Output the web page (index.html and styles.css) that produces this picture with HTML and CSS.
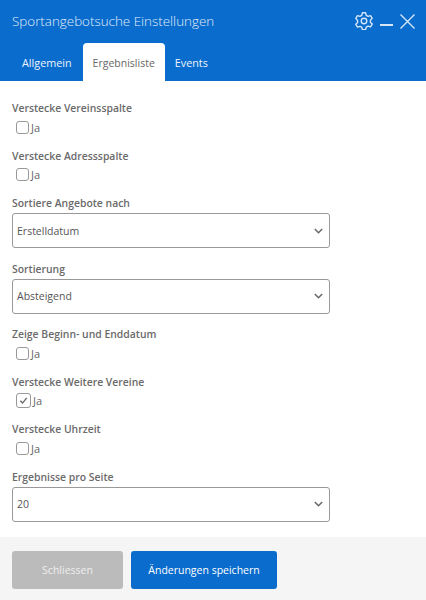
FILE: index.html
```html
<!DOCTYPE html>
<html lang="de">
<head>
    <meta charset="UTF-8">
    <meta name="viewport" content="width=device-width, initial-scale=1.0">
    <title>Sportangebotsuche Einstellungen</title>
    <link rel="stylesheet" href="styles.css">
</head>
<body>
    <header class="header">
        <div class="title-row">
            <h1 class="title">Sportangebotsuche Einstellungen</h1>
            <div class="window-icons">
                <svg width="18" height="18" viewBox="1 1 22 22" fill="none" stroke="#d5e6f7" stroke-width="1.700" stroke-linejoin="round">
                    <path d="M10 2h4l.7 3 2.300 1.300 3-.9 2 3.400-2.200 2.200v2.600l2.200 2.200-2 3.400-3-.9-2.300 1.300-.7 3h-4l-.7-3L7 18.600l-3 .9-2-3.400 2.200-2.200v-2.600L2 8.800l2-3.400 3 .9 2.300-1.300z"/>
                    <circle cx="12" cy="12" r="3.400"/>
                </svg>
                <span class="icon-minimize"></span>
                <svg width="15" height="15" viewBox="0 0 15 15" fill="none" stroke="#d5e6f7" stroke-width="1.400">
                    <path d="M.5.5l14 14M14.500.5l-14 14"/>
                </svg>
            </div>
        </div>
        <nav class="tabs">
            <a class="tab">Allgemein</a>
            <a class="tab active">Ergebnisliste</a>
            <a class="tab">Events</a>
        </nav>
    </header>

    <main class="form">
        <div class="field check-field">
            <div class="label">Verstecke Vereinsspalte</div>
            <div class="check-row"><span class="checkbox"></span><span>Ja</span></div>
        </div>
        <div class="field check-field">
            <div class="label">Verstecke Adressspalte</div>
            <div class="check-row"><span class="checkbox"></span><span>Ja</span></div>
        </div>
        <div class="field select-field">
            <div class="label">Sortiere Angebote nach</div>
            <div class="select">
                <span>Erstelldatum</span>
                <svg width="9" height="6" viewBox="0 0 9 6" fill="none" stroke="#666" stroke-width="1.500"><path d="M.8 1l3.700 3.700L8.200 1"/></svg>
            </div>
        </div>
        <div class="field select-field">
            <div class="label">Sortierung</div>
            <div class="select">
                <span>Absteigend</span>
                <svg width="9" height="6" viewBox="0 0 9 6" fill="none" stroke="#666" stroke-width="1.500"><path d="M.8 1l3.700 3.700L8.200 1"/></svg>
            </div>
        </div>
        <div class="field check-field">
            <div class="label">Zeige Beginn- und Enddatum</div>
            <div class="check-row"><span class="checkbox"></span><span>Ja</span></div>
        </div>
        <div class="field check-field">
            <div class="label">Verstecke Weitere Vereine</div>
            <div class="check-row">
                <span class="checkbox checked">
                    <svg width="11" height="11" viewBox="0 0 12 12" fill="none" stroke="#666" stroke-width="1.500"><path d="M2.500 6.200l2.500 2.600 4.500-5.600"/></svg>
                </span>
                <span>Ja</span>
            </div>
        </div>
        <div class="field check-field">
            <div class="label">Verstecke Uhrzeit</div>
            <div class="check-row"><span class="checkbox"></span><span>Ja</span></div>
        </div>
        <div class="field select-field">
            <div class="label">Ergebnisse pro Seite</div>
            <div class="select">
                <span>20</span>
                <svg width="9" height="6" viewBox="0 0 9 6" fill="none" stroke="#666" stroke-width="1.500"><path d="M.8 1l3.700 3.700L8.200 1"/></svg>
            </div>
        </div>
    </main>

    <footer class="footer">
        <button class="btn btn-close">Schliessen</button>
        <button class="btn btn-save">Änderungen speichern</button>
    </footer>
</body>
</html>
```

FILE: styles.css
```css
* {
    box-sizing: border-box;
}
body {
    margin: 0;
    height: 600px;
    overflow: hidden;
    display: flex;
    flex-direction: column;
    font-family: "Open Sans", "Noto Sans", sans-serif;
    font-size: 10.500px;
    color: #555;
    background-color: #fff;
}
.header {
    height: 81px;
    background-color: #0a6ccd;
    display: flex;
    flex-direction: column;
    justify-content: space-between;
}
.title-row {
    display: flex;
    justify-content: space-between;
    align-items: center;
    padding: 12px 11px 0 12px;
}
.title {
    margin: 0;
    font-size: 13.400px;
    font-weight: 300;
    color: #e0edf9;
}
.window-icons {
    display: flex;
    align-items: center;
    gap: 7px;
}
.icon-minimize {
    width: 13px;
    height: 2px;
    margin-top: 8px;
    background-color: #d5e6f7;
}
.tabs {
    display: flex;
    padding-left: 12px;
}
.tab {
    height: 38px;
    padding: 1px 10px 0;
    display: flex;
    align-items: center;
    font-size: 10.800px;
    font-weight: 500;
    color: #eef5fc;
    border-radius: 4px 4px 0 0;
}
.tab:first-child {
    padding-right: 11px;
}
.tab.active {
    background-color: #fff;
    color: #666;
    font-size: 10.500px;
    font-weight: 400;
}
.form {
    flex: 1;
    padding: 19px 12px 0;
}
.field {
    margin-bottom: 9.500px;
}
.label {
    font-size: 10.400px;
    font-weight: 600;
    line-height: 16px;
    color: #6a6a6a;
}
.check-row {
    height: 22px;
    padding-left: 4px;
    display: flex;
    align-items: center;
    gap: 2px;
    font-size: 11px;
    color: #666;
}
.checkbox {
    width: 13px;
    height: 13px;
    border: 1px solid #999;
    border-radius: 3px;
    display: flex;
    align-items: center;
    justify-content: center;
}
.checkbox.checked {
    width: 15px;
    height: 15px;
}
.select {
    width: 318px;
    height: 35px;
    margin-top: 2px;
    padding: 0 6px 0 4px;
    display: flex;
    align-items: center;
    justify-content: space-between;
    border: 1px solid #999;
    border-radius: 3px;
    color: #555;
}
.select-field {
    margin-bottom: 12.500px;
}
.footer {
    height: 63px;
    padding: 14px 12px 11px;
    display: flex;
    gap: 8px;
    background-color: #f5f5f5;
}
.btn {
    height: 38px;
    border: none;
    border-radius: 3px;
    font-family: inherit;
    font-size: 10.500px;
    color: #fff;
}
.btn-close {
    width: 111px;
    background-color: #bbb;
    color: #eee;
}
.btn-save {
    width: 146px;
    background-color: #0a6ccd;
}
```
